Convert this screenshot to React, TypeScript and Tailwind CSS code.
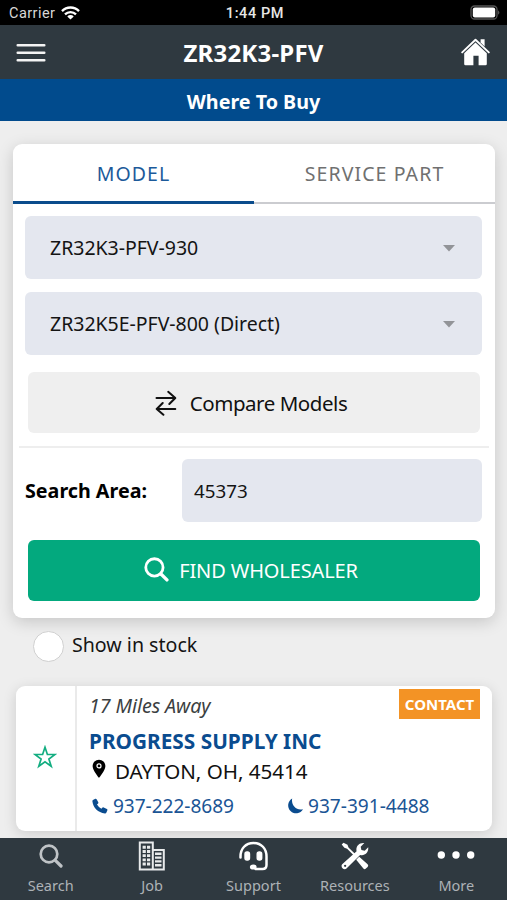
import React from "react";

function StatusBar() {
  return (
    <div className="flex h-[25px] items-center bg-black pt-[3px] pr-[6px] pl-[9px] font-['Roboto','Inter',sans-serif] text-[14.5px] leading-none text-[#d8d8d8]">
      <div className="flex flex-1 items-center gap-[6px]">
        <span className="tracking-[0.45px]">Carrier</span>
        <svg className="-mt-[2px]" width="19" height="14" viewBox="0 0 19 14" fill="none" stroke="#fff" strokeWidth="2.4">
          <path d="M1 5.1a12 12 0 0 1 17 0" />
          <path d="M4 8.4a7.9 7.9 0 0 1 11 0" />
          <path d="M9.5 13.6 6.3 10.4a4.6 4.6 0 0 1 6.4 0Z" fill="#fff" stroke="none" />
        </svg>
      </div>
      <span className="font-medium tracking-[0.6px] text-[#e6e6e6]">1:44 PM</span>
      <div className="flex flex-1 justify-end">
        <svg className="-mt-[3px]" width="31" height="15" viewBox="0 0 31 15">
          <rect x="1" y="1" width="26" height="13" rx="3.5" fill="none" stroke="#555" strokeWidth="1.3" />
          <rect x="2.8" y="2.6" width="22.4" height="9.8" rx="2" fill="#fff" />
          <path d="M28.2 5.2q2.3 2.3 0 4.6Z" fill="#666" />
        </svg>
      </div>
    </div>
  );
}

function Header() {
  return (
    <div className="flex h-[54px] items-center justify-between bg-[#2f3940] pr-[17px] pl-[16px]">
      <svg className="mt-[2px]" width="30" height="20" viewBox="0 0 30 20" stroke="#f4f4f4" strokeWidth="2.5" strokeLinecap="round">
        <path d="M1.7 2.3h26.6M1.7 9.8h26.6M1.7 17.2h26.6" />
      </svg>
      <h1 className="pt-[2px] text-[24px] leading-none font-bold tracking-[0.2px] text-white">ZR32K3-PFV</h1>
      <svg width="29" height="28" viewBox="0 0 29 28">
        <path d="M1.2 14.4 14.5 1.7 27.8 14.4" fill="none" stroke="#fff" strokeWidth="1.9" strokeLinecap="round" strokeLinejoin="round" />
        <path d="M19.6 1.2h4v7.2l-4-3.8Z" fill="#fff" />
        <path d="M3.2 15.2 14.5 4.6l11.3 10.6v10.7a1.3 1.3 0 0 1-1.3 1.3h-6.9v-9.500h-5.2v9.500H4.5a1.3 1.3 0 0 1-1.3-1.3Z" fill="#fff" />
      </svg>
    </div>
  );
}

function Select({ value }: { value: string }) {
  return (
    <div className="flex h-[63px] items-center justify-between rounded-[6px] bg-[#e4e7ef] pt-[1px] pr-[27px] pl-[25px] text-[19.5px] text-[#141414]">
      <span className="-mt-[1px] tracking-[-0.02px]">{value}</span>
      <svg width="12" height="7" viewBox="0 0 12 7" fill="#929498">
        <path d="M0 0h12L6 6.5Z" />
      </svg>
    </div>
  );
}

function SearchGlyph({ size }: { size: number }) {
  return (
    <svg width={size} height={size} viewBox="0 0 24 24" fill="none" stroke="currentColor">
      <circle cx="10" cy="10" r="8.3" strokeWidth="2.7" />
      <path d="m16.3 16.3 5.7 5.7" strokeWidth="3.2" strokeLinecap="round" />
    </svg>
  );
}

function SearchCard() {
  return (
    <section className="mr-[12px] ml-[13px] h-[474px] rounded-[9px] bg-white shadow-[0_4px_16px_rgba(0,0,0,0.17)]">
      <div className="flex h-[60px] text-[19.5px] tracking-[1.1px]">
        <div className="flex w-[241px] items-center justify-center border-b-3 border-[#0a4c8c] pt-[2px] text-[#1c5a9a]">MODEL</div>
        <div className="flex flex-1 items-center justify-center border-b-2 border-[#cbccd0] pt-[1px] text-[#707070]">SERVICE PART</div>
      </div>
      <div className="flex flex-col gap-[13px] pt-3 pr-[13px] pl-3">
        <Select value="ZR32K3-PFV-930" />
        <Select value="ZR32K5E-PFV-800 (Direct)" />
      </div>
      <button className="mt-[17px] ml-[15px] flex h-[61px] w-[452px] items-center justify-center gap-[13px] rounded-[6px] bg-[#efefef] pt-[2px] pr-[6px] text-[20.5px] tracking-[-0.45px] text-[#111]">
        <svg className="-mt-[1px]" width="22" height="26" viewBox="0 0 22 26" fill="none" stroke="currentColor" strokeWidth="2" strokeLinecap="round" strokeLinejoin="round">
          <path d="M1.5 8h18.6M13.2 1.8 20.3 8l-6 6" />
          <path d="M20.3 19H1.7M7.7 13 1.7 19l6.7 5.8" />
        </svg>
        <span>Compare Models</span>
      </button>
      <div className="mx-[6px] mt-[13px] h-[2px] bg-[#eeeeee]" />
      <div className="mt-[11px] flex items-center justify-between pr-[13px] pl-3">
        <span className="pt-[1px] text-[19.7px] font-bold text-black">Search Area:</span>
        <div className="flex h-[63px] w-[300px] items-center rounded-[6px] bg-[#e4e7ef] px-3 pt-[2px] text-[18.8px] text-[#141414]">45373</div>
      </div>
      <button className="mt-[18px] ml-[15px] flex h-[61px] w-[452px] items-center justify-center gap-[10px] rounded-[6px] bg-[#03a97e] pt-[1px] pr-[6px] text-[20px] tracking-[-0.13px] text-white">
        <span className="-mt-[3px]">
          <SearchGlyph size={25} />
        </span>
        <span>FIND WHOLESALER</span>
      </button>
    </section>
  );
}

function ResultCard() {
  return (
    <section className="mr-[15px] ml-[16px] flex h-[145px] rounded-[9px] bg-white shadow-[0_3px_14px_rgba(0,0,0,0.14)]">
      <div className="flex w-[61px] items-center justify-center border-r-2 border-[#eaeaea] pr-[2px] pb-[3px]">
        <svg width="24" height="24" viewBox="0 0 24 24" fill="none" stroke="#12ad80" strokeWidth="1.7" strokeLinejoin="miter">
          <path d="m12 2.3 2.4 7.2H22l-6.1 4.5 2.3 7.3-6.2-4.5-6.2 4.5 2.3-7.3L2 9.5h7.6Z" />
        </svg>
      </div>
      <div className="flex-1 pr-3 pl-[12px]">
        <div className="flex h-[40px] justify-between pt-[3px]">
          <span className="mt-[3px] h-[28px] text-[19.7px] leading-[28px] tracking-[-0.1px] text-[#3c3f42] italic">17 Miles Away</span>
          <span className="flex h-[30px] w-[81px] items-center justify-center bg-[#f39325] pt-[1px] text-[15px] font-bold text-white">CONTACT</span>
        </div>
        <div className="h-[30px] text-[20.8px] leading-[30px] font-bold text-[#0a4c8f]">PROGRESS SUPPLY INC</div>
        <div className="flex h-[32px] items-center gap-[9px] pl-[3px] text-[20.6px] tracking-[-0.02px] text-[#111]">
          <svg className="-mt-[6px]" width="14" height="20" viewBox="0 0 14 20">
            <path d="M7 .7a6.4 6.4 0 0 0-6.4 6.4C.6 11.5 7 19 7 19s6.400-7.500 6.400-11.900A6.400 6.400 0 0 0 7 .7Z" fill="#000" />
            <circle cx="7" cy="6.9" r="2" fill="none" stroke="#fff" strokeWidth="1.2" />
          </svg>
          <span className="-mt-[2px]">DAYTON, OH, 45414</span>
        </div>
        <div className="flex h-[36px] items-center pt-[1px] text-[19.1px] text-[#1b5595]">
          <div className="flex w-[198px] items-center gap-[5px] pl-[3px]">
            <svg width="16" height="16" viewBox="0 0 16 16" fill="#0a4c8f">
              <path d="M1 2.1 3.3.8q.8-.3 1.3.5l1.7 3q.3.7-.2 1.2L5 6.5q1.500 2.700 4.400 4.200l1.100-1.100q.5-.5 1.200-.2l3.200 1.600q.8.500.5 1.300l-1.100 2.400q-.4.800-1.300.7C6 14.900 1 9.400.4 3.300q-.1-.8.6-1.200Z" />
            </svg>
            <span className="tracking-[-0.05px]">937-222-8689</span>
          </div>
          <div className="flex items-center gap-[4px]">
            <svg width="17" height="16" viewBox="0 0 17 16" fill="#0a4c8f">
              <path d="M5.2.5A7.9 7.9 0 1 0 16 11.2C9.5 13 3.8 7.5 5.2.5Z" />
            </svg>
            <span>937-391-4488</span>
          </div>
        </div>
      </div>
    </section>
  );
}

function JobIcon() {
  return (
    <svg width="28" height="30" viewBox="0 0 28 30" fill="none" stroke="#e8eaeb">
      <path d="M1.8 1.5h13v27h-13ZM14.8 9h11v19.5h-11Z" strokeWidth="2" />
      <path d="M6.2 4.8v21M10.6 4.8v21" strokeWidth="3.2" strokeDasharray="2.9 1.3" />
      <path d="M17 12.8h6.5M17 16.6h6.5M17 20.4h6.5M17 24.2h6.5" strokeWidth="2.4" />
    </svg>
  );
}

function SupportIcon() {
  return (
    <svg width="30" height="30" viewBox="0 0 30 30" fill="none" stroke="#fff" strokeLinecap="round">
      <path d="M2.5 16.5v-1C2.5 7.5 7.7 2 15.5 2S28.5 7.5 28.5 15.5V24q0 4-4 4h-7" strokeWidth="2.5" />
      <rect x="7" y="11" width="4.5" height="8" rx="2" fill="#fff" strokeWidth="1.4" />
      <rect x="19.2" y="11" width="4.5" height="8" rx="2" fill="#fff" strokeWidth="1.4" />
      <ellipse cx="15.3" cy="26" rx="3.4" ry="2.6" fill="#fff" stroke="none" />
    </svg>
  );
}

function ToolsIcon() {
  return (
    <svg width="28" height="28" viewBox="0 0 28 28" fill="#fff">
      <path d="M.7 2.5 2.5.8l4 2 1 2.600 8.200 8.200-1.300 1.300-8.300-8.200-2.700-1Z" />
      <path d="m15.2 17.7 3-3 8.400 7.600q1.300 1.300 0 2.600l-1.700 1.700q-1.300 1.200-2.500 0Z" />
      <path fillRule="evenodd" d="m1.2 22.3 14.4-13C14.4 4.4 18.2.3 23.3 1l-3.600 3.700.7 3.300 3.300.7 3.500-3.500c.7 5.300-3.500 9-8.100 7.700L5.500 26.500c-2.700 2.200-6.500-1.900-4.300-4.200Zm2.200.7a1.100 1.100 0 1 0 1.600 1.500A1.100 1.100 0 0 0 3.400 23Z" />
    </svg>
  );
}

function BottomNav() {
  const items = [
    { label: "Search", icon: <SearchGlyph size={24} /> },
    { label: "Job", icon: <JobIcon /> },
    { label: "Support", icon: <SupportIcon /> },
    { label: "Resources", icon: <ToolsIcon /> },
    {
      label: "More",
      icon: (
        <svg className="-mt-[1px]" width="38" height="8" viewBox="0 0 38 8" fill="#fff">
          <circle cx="4.3" cy="4" r="3.7" />
          <circle cx="19" cy="4" r="3.7" />
          <circle cx="33.7" cy="4" r="3.7" />
        </svg>
      ),
    },
  ];
  return (
    <nav className="grid h-[62px] grid-cols-5 bg-[#2f3940] text-[#bfc3c6]">
      {items.map((item) => (
        <div key={item.label} className="flex flex-col items-center">
          <div className="flex h-[35px] items-center">{item.icon}</div>
          <span className="mt-[2px] text-[14.5px] leading-[20px] text-[#adb2b6]">{item.label}</span>
        </div>
      ))}
    </nav>
  );
}

export default function App() {
  return (
    <div className="flex h-[900px] w-[507px] flex-col overflow-hidden bg-[#eeeeee] font-['Noto_Sans','Open_Sans',sans-serif]">
      <StatusBar />
      <Header />
      <div className="mb-[23px] flex h-[42px] items-center justify-center bg-[#014b8d] pt-[3px] text-[19.7px] font-bold text-white">
        Where To Buy
      </div>
      <SearchCard />
      <label className="mt-[12px] mb-[24px] flex h-[32px] items-center gap-[8px] pl-[33px] text-[19.6px] text-[#141414]">
        <span className="size-[31px] rounded-full border border-[#d0d0d0] bg-white" />
        <span className="-mt-[2px]">Show in stock</span>
      </label>
      <ResultCard />
      <div className="mt-auto">
        <BottomNav />
      </div>
    </div>
  );
}
